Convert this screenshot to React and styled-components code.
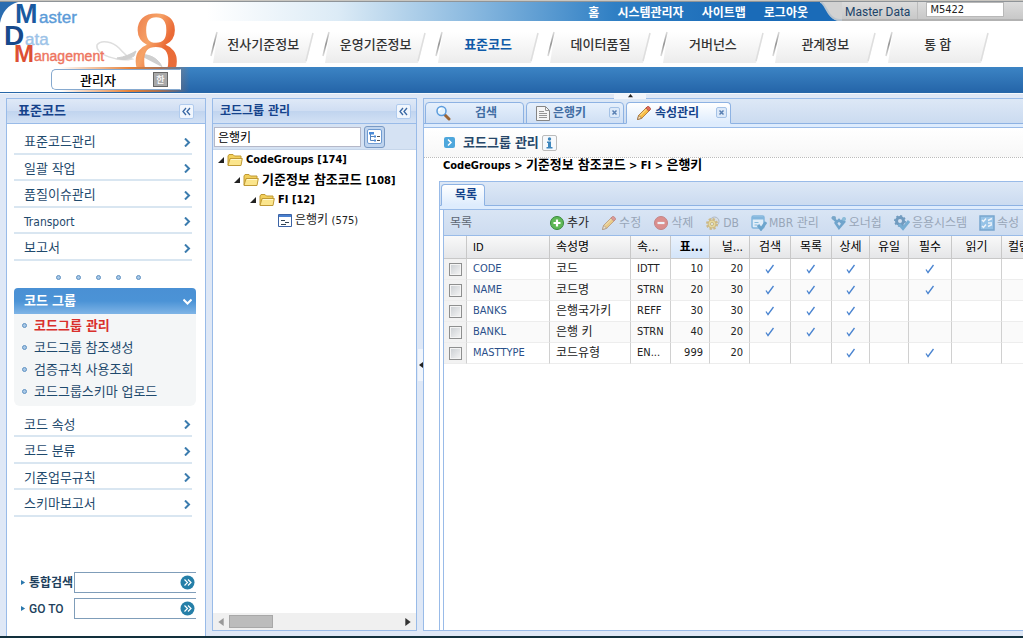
import React from 'react';
import styled, { createGlobalStyle, css } from 'styled-components';

const Global = createGlobalStyle`
  *, *::before, *::after { box-sizing: border-box; }
  html, body, #root { height: 100%; }
  body {
    margin: 0;
    overflow: hidden;
    background: #fff;
    color: #000;
    font: 12px/16px "DejaVu Sans Condensed", "Noto Sans CJK KR", sans-serif;
  }
  button, input { font: inherit; color: inherit; margin: 0; }
  button { padding: 0; border: 0; background: none; }
  a { color: inherit; text-decoration: none; }
  ul { list-style: none; margin: 0; padding: 0; }
  h1, h2, h3 { margin: 0; font: inherit; }
  svg { display: block; flex: none; }
`;

const Page = styled.div`
  min-height: 100vh;
  display: flex;
  flex-direction: column;
  background: #dfe8f6;
`;

/* ---------- header ---------- */
const Header = styled.header`
  display: flex;
  height: 67px;
  flex: none;
  border-top: 1px solid #c9c6c0;
  background: #fff;
`;
const LogoBox = styled.a`
  width: 207px;
  flex: none;
  overflow: hidden;
  border-top: 1px solid #8f9498;
`;
const HeaderMain = styled.div`
  flex: 1;
  min-width: 0;
  display: flex;
  flex-direction: column;
`;
const Utility = styled.div`
  display: flex;
  justify-content: flex-end;
  height: 20px;
  border-top: 1px solid #8f9498;
  background: linear-gradient(90deg, #fff 0, #dcebf6 16%, #82b4dd 34%, #2f7fc4 50%, #1a6bb8 66%);
`;
const UtilityLinks = styled.nav`
  display: flex;
  align-items: center;
  gap: 18px;
  padding: 0 12px 0 0;
  color: #fff;
  font-family: "Noto Sans CJK KR", sans-serif;
  font-size: 12px;
  font-weight: 700;
`;
const MasterData = styled.label`
  display: flex;
  align-items: flex-start;
  width: 181px;
  flex: none;
  padding-left: 3px;
  background: linear-gradient(#dcdcdc, #c8c8c8);
  border-bottom: 2px solid #b2b2b2;
  color: #1c4468;
  font: 400 12px/20px Roboto, sans-serif;
`;
const MasterText = styled.span`
  padding: 1px 7px 0 0;
  margin-right: 8px;
  border-right: 1px solid #bcbcbc;
  line-height: 18px;
  height: 17px;
`;
const MasterInput = styled.input`
  width: 78px;
  height: 15px;
  padding: 0 3px;
  border: 1px solid #b8b8b8;
  background: #fff;
  color: #222;
  font: 11px/13px "DejaVu Sans Condensed", sans-serif;
`;
const Tabs = styled.nav`
  display: flex;
  flex: 1;
  padding-right: 29px;
`;
const TopTab = styled.a`
  position: relative;
  flex: 1;
  display: flex;
  align-items: center;
  justify-content: center;
  color: ${p => (p.$active ? '#0f5aa8' : '#333')};
  font: ${p => (p.$active ? 700 : 500)} 13px/20px "Noto Sans CJK KR", sans-serif;
  span { position: relative; }
  svg { position: absolute; left: 3px; top: 9px; }
`;
const UserBar = styled.div`
  display: flex;
  height: 27px;
  flex: none;
  padding: 2px 0 2px 51px;
  border-bottom: 1px solid #f4f8fd;
  background: linear-gradient(90deg, #fff 60px, rgba(240, 130, 50, 0.95) 130px, rgba(196, 112, 60, 0.8) 160px, rgba(46, 112, 176, 0) 190px),
    linear-gradient(#3c84c4, #2464a8);
  box-shadow: inset 0 -1px 0 #2767a8;
`;
const UserBox = styled.div`
  display: flex;
  align-items: center;
  justify-content: space-between;
  width: 130px;
  height: 21px;
  padding: 0 12px 0 28px;
  border: 1px solid #86a9cf;
  border-right-color: #fff;
  border-radius: 5px 0 0 5px;
  background: #fff;
  font: 500 13px/18px "Noto Sans CJK KR", sans-serif;
`;
const LangButton = styled.button`
  width: 15px;
  height: 15px;
  border: 1px solid #666;
  background: #a9a9a9;
  color: #fff;
  font-size: 9px;
  line-height: 12px;
`;

/* ---------- panels ---------- */
const Workspace = styled.main`
  flex: 1;
  min-height: 0;
  display: flex;
  gap: 6px;
  padding: 4px 0 0 6px;
  border-bottom: 2px solid #12303c;
`;
const Panel = styled.section`
  display: flex;
  flex-direction: column;
  flex: none;
  width: ${p => p.$width}px;
  margin-bottom: ${p => (p.$raised ? 5 : 0)}px;
  border: 1px solid #99bbe8;
  border-bottom-width: ${p => (p.$raised ? 1 : 0)}px;
  background: #fff;
`;
const PanelHead = styled.div`
  display: flex;
  align-items: center;
  justify-content: space-between;
  height: 25px;
  flex: none;
  padding: 0 ${p => p.$pad}px 0 ${p => p.$left}px;
  border-bottom: 1px solid #99bbe8;
  background: linear-gradient(#dfe9f7, #d0def3 48%, #c0d4ef 50%, #d2e1f5);
  color: #15428b;
  font-weight: 700;
  font-size: ${p => p.$size}px;
`;
const Collapse = styled.button`
  width: 15px;
  height: 15px;
  display: grid;
  place-items: center;
  border: 1px solid #b0cbee;
  border-radius: 2px;
  background: #f1f6fd;
`;

/* ---------- sidebar ---------- */
const SideBody = styled.div`
  flex: 1;
  display: flex;
  flex-direction: column;
  padding: 4px 9px 0 7px;
  color: #1f4a6d;
  font-size: 13px;
`;
const MenuList = styled.ul`
  margin-right: 4px;
  li { height: 26px; border-bottom: 2px solid #d9e6f1; }
  li:nth-child(${p => p.$tall}) { height: 27px; }
`;
const MenuLink = styled.a`
  display: flex;
  align-items: center;
  justify-content: space-between;
  height: 100%;
  padding: 3px 1px 0 10px;
  font-size: ${p => (p.$latin ? 12 : 13)}px;
`;
const Dots = styled.div`
  display: flex;
  justify-content: center;
  gap: 15px;
  margin: 14px 13px 8px 0;
`;
const Dot = styled.span`
  width: 5px;
  height: 5px;
  flex: none;
  border-radius: 50%;
  border: 1px solid #5f91c2;
  background: #a8c8e6;
`;
const GroupButton = styled.button`
  display: flex;
  align-items: center;
  justify-content: space-between;
  height: 26px;
  padding: 0 4px 0 10px;
  border-radius: 4px 4px 0 0;
  background: linear-gradient(#4a90d4, #4b93d6 50%, #7fb4e6);
  color: #fff;
  font-weight: 700;
`;
const SubList = styled.ul`
  padding: 0 0 4px 8px;
  margin-bottom: 5px;
  border-radius: 0 0 6px 6px;
  background: #f4f6f7;
`;
const SubLink = styled.a`
  display: flex;
  align-items: center;
  gap: 7px;
  height: 22px;
  padding-top: 1px;
  ${p => p.$active && css`color: #d9302c; font-weight: 700;`}
`;
const Finder = styled.form`
  display: grid;
  grid-template-columns: 53px minmax(0, 1fr);
  row-gap: 5px;
  margin-top: auto;
  padding: 0 0 17px 7px;
`;
const FindLabel = styled.label`
  display: flex;
  align-items: center;
  gap: 3px;
  font: 700 12px/20px Roboto, "Noto Sans CJK KR", sans-serif;
  font-weight: ${p => (p.$light ? 500 : 700)};
  color: #213f5c;
  white-space: nowrap;
`;
const FindField = styled.div`
  display: flex;
  align-items: center;
  height: 21px;
  border: 1px solid #7f9db9;
  border-right: 0;
  input { flex: 1; min-width: 0; height: 19px; border: 0; background: none; outline: 0; }
`;
const GoButton = styled.button`
  width: 15px;
  height: 15px;
  flex: none;
  margin-right: 1px;
`;

/* ---------- tree ---------- */
const SearchBar = styled.div`
  display: flex;
  align-items: center;
  gap: 3px;
  height: 26px;
  flex: none;
  padding: 0 1px;
  border-bottom: 1px solid #c6d6ea;
  background: #d5e2f3;
  input {
    width: 147px;
    height: 20px;
    padding: 0 3px;
    border: 1px solid #b5b8c8;
    background: #fff;
    font-size: 12px;
  }
`;
const TreeButton = styled.button`
  width: 21px;
  height: 22px;
  display: grid;
  place-items: center;
  border: 1px solid #7a9ac4;
  border-radius: 3px;
  background: #bfd4ee;
`;
const Tree = styled.ul`
  flex: 1;
`;
const TreeRow = styled.li`
  display: flex;
  align-items: center;
  height: 20px;
  padding-left: ${p => 5 + p.$depth * 16}px;
  font-weight: ${p => (p.$bold ? 700 : 400)};
  font-size: ${p => (p.$bold ? 13 : 12)}px;
  white-space: nowrap;
  color: ${p => (p.$bold ? '#000' : '#222')};
  & > svg { margin-right: 3px; }
`;
const ScrollTrack = styled.div`
  display: flex;
  align-items: center;
  height: 17px;
  padding: 0 4px;
  background: #f0f0f0;
  & > svg:last-child { margin-left: auto; }
`;
const ScrollThumb = styled.div`
  width: 44px;
  height: 13px;
  margin-left: 4px;
  border: 1px solid #a8a8a8;
  background: #bcbcbc;
`;
const SplitHandle = styled.div`
  position: absolute;
  display: grid;
  place-items: center;
  background: #f1f5fb;
  ${p => (p.$top
    ? css`left: 190px; top: -5px; width: 32px; height: 5px;`
    : css`left: -6px; top: 250px; width: 5px; height: 32px;`)}
`;

/* ---------- content ---------- */
const Content = styled.section`
  position: relative;
  flex: 1;
  min-width: 0;
  display: flex;
  flex-direction: column;
  margin-bottom: 5px;
  border: 1px solid #99bbe8;
  border-right: 0;
  background: #fff;
`;
const TabStrip = styled.div`
  display: flex;
  align-items: flex-end;
  gap: ${p => (p.$inner ? 0 : 2)}px;
  flex: none;
  height: ${p => (p.$inner ? 28 : 29)}px;
  padding: 0 1px 3px;
  border-bottom: 1px solid #99bbe8;
  background: linear-gradient(#dde8f6, #cbdbf0 ${p => (p.$inner ? 23 : 24)}px, #8db2e3 ${p => (p.$inner ? 23 : 24)}px,
    #8db2e3 ${p => (p.$inner ? 24 : 25)}px, #deecfd ${p => (p.$inner ? 24 : 25)}px);
`;
const Tab = styled.button`
  display: flex;
  align-items: center;
  height: 22px;
  width: ${p => p.$width}px;
  padding: 0 3px 0 9px;
  border: 1px solid #8db2e3;
  border-bottom-color: ${p => (p.$active ? '#deecfd' : '#8db2e3')};
  border-radius: 4px 4px 0 0;
  background: ${p => (p.$active ? 'linear-gradient(#fff, #deecfd)' : 'linear-gradient(#e6f0fc, #cfdff4)')};
  color: ${p => (p.$active ? '#15428b' : '#416da3')};
  font-weight: 700;
  font-size: 12px;
  & > span { flex: 1; text-align: ${p => (p.$center ? 'center' : 'left')}; padding: 0 ${p => (p.$center ? 0 : 3)}px; }
  & > span:only-child { padding: 0; }
  & > svg:last-child { align-self: flex-start; margin-top: 4px; }
`;
const SectionTitle = styled.div`
  display: flex;
  align-items: center;
  height: 30px;
  flex: none;
  padding-left: 20px;
  border-bottom: 1px dotted #bbb;
  background: linear-gradient(#fff, #f7f7f7);
  color: #264769;
  font-size: 13px;
  font-weight: 700;
  h2 { margin: 0 3px 0 8px; }
`;
const InfoButton = styled.button`
  width: 15px;
  height: 16px;
  display: grid;
  place-items: center;
  border: 1px solid #bbb;
  border-radius: 2px;
  background: #f6f9fc;
`;
const Crumbs = styled.nav`
  height: 23px;
  flex: none;
  padding-left: 19px;
  font-size: 13px;
  line-height: 14px;
  font-weight: 700;
  white-space: pre;
`;
const Latin = styled.span`
  font-size: 11px;
`;
const Inner = styled.div`
  flex: 1;
  min-height: 0;
  display: flex;
  flex-direction: column;
  margin-left: 15px;
  border: 1px solid #99bbe8;
  border-width: 1px 0 0 1px;
`;
const Grid = styled.div`
  flex: 1;
  margin-left: 3px;
  border-left: 1px solid #99bbe8;
  overflow: hidden;
`;
const Toolbar = styled.div`
  display: flex;
  align-items: center;
  gap: 12px;
  height: 26px;
  padding-left: 6px;
  border-bottom: 1px solid #99bbe8;
  background: linear-gradient(#d9e5f4, #cddcf0);
  color: #5c6673;
  font-size: 12px;
  white-space: nowrap;
  h3 { width: 87px; flex: none; }
`;
const Tool = styled.button`
  display: flex;
  align-items: center;
  gap: 2px;
  flex: none;
  color: #222;
  svg { opacity: ${p => (p.disabled ? 0.6 : 1)}; }
  &:disabled { color: #98a6b8; }
`;
const Table = styled.table`
  width: 608px;
  table-layout: fixed;
  border-collapse: separate;
  border-spacing: 0;
`;
const Th = styled.th`
  height: 23px;
  padding: 0 6px;
  overflow: hidden;
  white-space: nowrap;
  border-right: 1px solid #c8c8c8;
  border-bottom: 1px solid #c8c8c8;
  background: ${p => (p.$sorted ? 'linear-gradient(#ebf3fd, #d3e4f9)' : 'linear-gradient(#f9f9f9, #e5e6e8)')};
  font-weight: ${p => (p.$sorted ? 700 : 400)};
  font-size: 12px;
  text-align: ${p => p.$align || 'center'};
`;
const Td = styled.td`
  height: 21px;
  padding: 0 ${p => (p.$align === 'center' ? 0 : 6)}px;
  overflow: hidden;
  white-space: nowrap;
  border-right: 1px solid #d0d0d0;
  border-bottom: 1px solid #ededed;
  color: ${p => (p.$link ? '#2a4f8a' : '#222')};
  font-size: ${p => (p.$korean ? 12 : 11)}px;
  text-align: ${p => p.$align || 'left'};
  svg { margin: 0 auto; }
`;
const Row = styled.tr`
  background: ${p => (p.$alt ? '#fafafa' : '#fff')};
  td:first-child { background: #f2f2f2; }
`;
const Check = styled.input`
  appearance: none;
  display: block;
  width: 13px;
  height: 13px;
  margin: 0 auto !important;
  border: 1px solid #8e8f8f;
  background: linear-gradient(135deg, #c9cdd1, #f6f6f6);
  box-shadow: inset 0 0 0 1px #f4f4f4;
`;

/* ---------- drawings ---------- */
const Logo = () => (
  <svg width="207" height="65" viewBox="0 2 207 65" role="img" aria-label="Master Data Management 8">
    <defs>
      <linearGradient id="orange" x1="0" y1="0" x2="1" y2="1">
        <stop offset="0" stopColor="#e8683c" />
        <stop offset="0.4" stopColor="#f6a367" />
        <stop offset="0.6" stopColor="#ea6a36" />
        <stop offset="1" stopColor="#e8703f" />
      </linearGradient>
    </defs>
    <path d="M0 2h18C8 5 2 12 0 23z" fill="#2a6cb0" />
    <path d="M97 45c4-6 16-3 22 3 4 4 6 8 13 11-13 3-37-4-35-14z" fill="none" stroke="#dedede" strokeWidth="1.500" />
    <path d="M117 58c8-1 14-4 19-7l-2 5c-5 3-10 5-17 2zM139 55c10-2 20 4 23 12" fill="#cfcfcf" stroke="#cfcfcf" />
    <g fontFamily="Liberation Sans, sans-serif">
      <text x="15" y="23" fontSize="27" fontWeight="700" fill="#1a5aa0">M</text>
      <text x="39" y="23" fontSize="17" fill="#5b9bd8" stroke="#5b9bd8" strokeWidth="0.4">aster</text>
      <text x="4" y="45" fontSize="28" fontWeight="700" fill="#174a8c">D</text>
      <text x="25" y="45" fontSize="17" fill="#9cc3e8" stroke="#9cc3e8" strokeWidth="0.4">ata</text>
      <text x="14" y="62" fontSize="24" fontWeight="700" fill="#dd4f34">M</text>
      <text x="34" y="61" fontSize="14" fill="#ee7560" stroke="#ee7560" strokeWidth="0.4">anagement</text>
    </g>
    <text x="132" y="78" fontFamily="Liberation Serif, serif" fontSize="97" fill="url(#orange)">8</text>
  </svg>
);
const TabShape = () => (
  <svg width="106" height="34" viewBox="0 0 106 34" aria-hidden="true">
    <defs>
      <linearGradient id="tabfill" x1="0" y1="0" x2="0" y2="1">
        <stop offset="0" stopColor="#fff" />
        <stop offset="1" stopColor="#ececec" />
      </linearGradient>
      <linearGradient id="tabedge" x1="0" y1="0" x2="0" y2="1">
        <stop offset="0" stopColor="#ddd" />
        <stop offset="0.5" stopColor="#909090" />
        <stop offset="1" stopColor="#ddd" />
      </linearGradient>
    </defs>
    <path d="M8 2h96l-8 31H3z" fill="url(#tabfill)" />
    <path d="M7 2L1 26" stroke="url(#tabedge)" strokeWidth="1.5" />
    <path d="M103 3l-7 28" stroke="#dedede" strokeWidth="1.5" />
  </svg>
);
const Curve = () => (
  <svg width="22" height="19" viewBox="0 0 22 19" aria-hidden="true">
    <path d="M0 0c6 0 7 19 20 19h2V0z" fill="#d2d2d2" />
    <path d="M0 0c6 0 7 18 20 18h2" fill="none" stroke="#b8c3cd" strokeWidth="2" />
  </svg>
);
const Chevrons = () => (
  <svg width="9" height="9" viewBox="0 0 9 9" fill="none" stroke="#3a68a4" strokeWidth="1.3">
    <path d="M4 1L1 4.500L4 8M8 1L5 4.500L8 8" />
  </svg>
);
const Arrow = ({ down }) => (
  <svg width="9" height="9" viewBox="0 0 9 9" fill="none" stroke={down ? '#fff' : '#3c7cae'} strokeWidth="2">
    <path d={down ? 'M0.500 2.500l4 4 4-4' : 'M3 0.500l4 4-4 4'} />
  </svg>
);
const Tri = ({ d, size = 6, color = '#222' }) => (
  <svg width={size} height={size} viewBox="0 0 6 6"><path d={d} fill={color} /></svg>
);
const Folder = () => (
  <svg width="16" height="14" viewBox="0 0 16 14">
    <path d="M1 12V3l1-1.500h4L7.500 3H14v4" fill="#f2cf5b" stroke="#c09a35" />
    <path d="M1 12.500L3 5.500H15.300L14 12.500z" fill="#fbe58c" stroke="#c09a35" />
    <path d="M4 6.500h10" stroke="#fff8cf" />
  </svg>
);
const Leaf = () => (
  <svg width="14" height="13" viewBox="0 0 14 13">
    <path d="M.5.5h13v12H.5z" fill="#fff" stroke="#3c63a5" />
    <path d="M1 2h12" stroke="#4a80cf" strokeWidth="2" />
    <path d="M3 6.500h4M7 8.500h4M3 10.500h5" stroke="#345" />
  </svg>
);
const Pencil = () => (
  <svg width="16" height="16" viewBox="0 0 16 16">
    <path d="M1.500 14.500l1.200-4.200L11 2l3 3-8.300 8.300z" fill="#f8bd45" stroke="#a66a2c" strokeWidth=".8" />
    <path d="M9.800 3.200L11.500 1.500c.8-.8 3.800 2 3 3L12.800 6z" fill="#e26b5a" stroke="#a84838" strokeWidth=".8" />
    <path d="M1.500 14.500l1.200-4.200 3 3z" fill="#fbe4bf" stroke="#8b633a" strokeWidth=".7" />
    <path d="M4 10.500L10.500 4" stroke="#ffe7a3" />
  </svg>
);
const Magnifier = () => (
  <svg width="17" height="16" viewBox="0 0 17 16">
    <path d="M10 10l4 4" stroke="#9b6535" strokeWidth="3" strokeLinecap="round" />
    <circle cx="6.500" cy="6" r="4.500" fill="#e4f3fd" stroke="#5b9bdc" strokeWidth="1.5" />
    <path d="M4 6a2.500 2.500 0 0 1 2.500-2.500" fill="none" stroke="#fff" strokeWidth="1.3" />
  </svg>
);
const Page16 = () => (
  <svg width="14" height="15" viewBox="0 0 14 15">
    <path d="M.5.500h9l4 4v10H.5z" fill="#f5f5f5" stroke="#858585" />
    <path d="M9.500.5v4h4M3 5.500h5M3 7.500h8M3 9.500h8M3 11.500h8" fill="none" stroke="#959595" />
  </svg>
);
const CloseIcon = () => (
  <svg width="11" height="11" viewBox="0 0 11 11">
    <rect x=".5" y=".5" width="10" height="10" rx="1.500" fill="#dce9f9" stroke="#a5c2e6" />
    <path d="M3.500 3.500l4 4M7.500 3.500l-4 4" stroke="#587fb2" strokeWidth="1.500" />
  </svg>
);
const Circle = ({ plus }) => (
  <svg width="16" height="16" viewBox="0 0 16 16">
    <circle cx="8" cy="8" r="6.500" fill={plus ? '#5fb857' : '#e05a4c'} stroke={plus ? '#37893a' : '#b8483f'} />
    <path d={plus ? 'M8 4.500v7M4.500 8h7' : 'M4.500 8h7'} stroke="#fff" strokeWidth="2.200" />
  </svg>
);
const Gear = () => (
  <svg width="16" height="16" viewBox="0 0 16 16">
    <circle cx="9.500" cy="6.500" r="4.500" fill="#d5dadf" stroke="#989ea4" />
    <circle cx="7" cy="9" r="4.800" fill="none" stroke="#c9a040" strokeWidth="2.500" strokeDasharray="2.200 1.570" />
    <circle cx="7" cy="9" r="4" fill="#f3d568" stroke="#c9a040" />
    <circle cx="7" cy="9" r="1.500" fill="#fff" stroke="#b99a3c" />
  </svg>
);
const Form = () => (
  <svg width="16" height="16" viewBox="0 0 16 16">
    <rect x="1" y="1" width="12" height="12" rx="1.500" fill="#eaf5fc" stroke="#4d9ad0" strokeWidth="1.500" />
    <path d="M1 3h12" stroke="#4d9ad0" strokeWidth="3" />
    <path d="M3.500 7.500h4M3.500 10h3" stroke="#55a4d0" />
    <path d="M7 10l3 4 5-7" fill="none" stroke="#2c7fb5" strokeWidth="3" />
  </svg>
);
const Owner = () => (
  <svg width="16" height="16" viewBox="0 0 16 16">
    <path d="M1 2l5 5 2-2 2 2 4-4M4 7l4 6 6-7" fill="none" stroke="#2f7db4" strokeWidth="2.500" />
    <circle cx="3" cy="3" r="2" fill="#3d80ad" /><circle cx="13" cy="4" r="2" fill="#5da5c9" />
  </svg>
);
const System = () => (
  <svg width="16" height="16" viewBox="0 0 16 16">
    <circle cx="6" cy="6" r="3.500" fill="none" stroke="#2f6d9e" strokeWidth="3" />
    <circle cx="6" cy="6" r="5.200" fill="none" stroke="#2f6d9e" strokeWidth="1.500" strokeDasharray="2 2" />
    <path d="M5 9l4 4.500L15 6" fill="none" stroke="#3b8dc0" strokeWidth="3" />
  </svg>
);
const Props = () => (
  <svg width="16" height="16" viewBox="0 0 16 16">
    <rect x="1" y="1" width="14" height="14" fill="#6fb0e0" stroke="#3d80b8" strokeWidth="1.500" />
    <path d="M3 5l1.500 1.500L7 3.500M3 11l1.500 1.500L7 9.500M9 5.500l4-2M9 11.500l4-2M9 8h4" fill="none" stroke="#fff" strokeWidth="1.500" />
  </svg>
);
const Tick = () => (
  <svg width="10" height="10" viewBox="0 0 10 10" role="img" aria-label="예">
    <path d="M1 5.500l2 3L8.500 1" fill="none" stroke="#4a84d0" strokeWidth="1.300" />
  </svg>
);

/* ---------- data ---------- */
const topTabs = ['전사기준정보', '운영기준정보', '표준코드', '데이터품질', '거버넌스', '관계정보', '통 합'];
const menuA = ['표준코드관리', '일괄 작업', '품질이슈관리', 'Transport', '보고서'];
const subMenu = ['코드그룹 관리', '코드그룹 참조생성', '검증규칙 사용조회', '코드그룹스키마 업로드'];
const menuB = ['코드 속성', '코드 분류', '기준업무규칙', '스키마보고서'];
const tools = [
  ['추가', <Circle plus />], ['수정', <Pencil />], ['삭제', <Circle />], ['DB', <Gear />],
  ['MBR 관리', <Form />], ['오너쉽', <Owner />], ['응용시스템', <System />], ['속성', <Props />],
];
const columns = [
  ['', 23], ['ID', 83, 'left'], ['속성명', 81, 'left'], ['속...', 40, 'left'], ['표...', 39, 'right'], ['널...', 40, 'right'],
  ['검색', 41], ['목록', 41], ['상세', 38], ['유일', 39], ['필수', 43], ['읽기', 50], ['컬럼', 50, 'left'],
];
const rows = [
  ['CODE', '코드', 'IDTT', 10, 20, '1110100'],
  ['NAME', '코드명', 'STRN', 20, 30, '1110100'],
  ['BANKS', '은행국가키', 'REFF', 30, 30, '1110000'],
  ['BANKL', '은행 키', 'STRN', 40, 20, '1110000'],
  ['MASTTYPE', '코드유형', 'EN...', 999, 20, '0010100'],
];

const Menu = ({ items, tall }) => (
  <MenuList $tall={tall}>
    {items.map(t => (
      <li key={t}><MenuLink href="#" $latin={t === 'Transport'}>{t}<Arrow /></MenuLink></li>
    ))}
  </MenuList>
);

const FindRow = ({ id, label, light }) => (
  <>
    <FindLabel htmlFor={id} $light={light}><Tri d="M0 0l5 3-5 3z" size={5} color="#2b78ad" />{label}</FindLabel>
    <FindField>
      <input id={id} type="text" />
      <GoButton type="button" aria-label={label}>
        <svg width="15" height="15" viewBox="0 0 15 15">
          <circle cx="7.500" cy="7.500" r="7" fill="#257fa8" />
          <path d="M4.500 4.500l3 3-3 3M8 4.500l3 3-3 3" fill="none" stroke="#fff" strokeWidth="1.200" />
        </svg>
      </GoButton>
    </FindField>
  </>
);

export default function App() {
  return (
    <Page>
      <Global />
      <Header>
        <LogoBox href="#"><Logo /></LogoBox>
        <HeaderMain>
          <Utility>
            <UtilityLinks>
              {['홈', '시스템관리자', '사이트맵', '로그아웃'].map(t => <a key={t} href="#">{t}</a>)}
            </UtilityLinks>
            <Curve />
            <MasterData>
              <MasterText>Master Data</MasterText>
              <MasterInput defaultValue="M5422" />
            </MasterData>
          </Utility>
          <Tabs>
            {topTabs.map(t => (
              <TopTab key={t} href="#" $active={t === '표준코드'}><TabShape /><span>{t}</span></TopTab>
            ))}
          </Tabs>
        </HeaderMain>
      </Header>
      <UserBar>
        <UserBox>관리자<LangButton type="button">한</LangButton></UserBox>
      </UserBar>

      <Workspace>
        <Panel as="aside" $width={200}>
          <PanelHead $left={11} $pad={11} $size={13}>
            <h2>표준코드</h2>
            <Collapse aria-label="접기"><Chevrons /></Collapse>
          </PanelHead>
          <SideBody>
            <Menu items={menuA} tall="odd" />
            <Dots>{[0, 1, 2, 3, 4].map(i => <Dot key={i} />)}</Dots>
            <GroupButton type="button">코드 그룹<Arrow down /></GroupButton>
            <SubList>
              {subMenu.map((t, i) => (
                <li key={t}><SubLink href="#" $active={i === 0}><Dot />{t}</SubLink></li>
              ))}
            </SubList>
            <Menu items={menuB} tall="even" />
            <Finder>
              <FindRow id="find" label="통합검색" />
              <FindRow id="goto" label="GO TO" light />
            </Finder>
          </SideBody>
        </Panel>

        <Panel $width={205} $raised>
          <PanelHead $left={7} $pad={5} $size={12}>
            <h2>코드그룹 관리</h2>
            <Collapse aria-label="접기"><Chevrons /></Collapse>
          </PanelHead>
          <SearchBar>
            <input aria-label="코드그룹 검색" defaultValue="은행키" />
            <TreeButton aria-label="트리 보기">
              <svg width="15" height="15" viewBox="0 0 15 15">
                <rect x=".5" y=".5" width="14" height="14" rx="1.500" fill="#fff" stroke="#6f9bd1" />
                <path d="M3.500 5v6.500h4M3.500 7.500h4" fill="none" stroke="#5583bd" />
                <path d="M2 3h5v2.500H2zM7 6.500h2v2H7zM7 10.500h2v2H7z" fill="#4b8bd8" />
                <path d="M10 7.500h3M10 11.500h3" stroke="#555" />
              </svg>
            </TreeButton>
          </SearchBar>
          <Tree>
            <TreeRow $depth={0} $bold><Tri d="M6 0v6H0z" /><Folder /><Latin>CodeGroups [174]</Latin></TreeRow>
            <TreeRow $depth={1} $bold><Tri d="M6 0v6H0z" /><Folder /><span>기준정보 참조코드 <Latin>[108]</Latin></span></TreeRow>
            <TreeRow $depth={2} $bold><Tri d="M6 0v6H0z" /><Folder /><Latin>FI [12]</Latin></TreeRow>
            <TreeRow $depth={3.75}><Leaf /><span>은행키 <Latin>(575)</Latin></span></TreeRow>
          </Tree>
          <ScrollTrack>
            <Tri d="M5 0v6L1 3z" size={8} color="#999" />
            <ScrollThumb />
            <Tri d="M1 0v6l4-3z" size={8} color="#333" />
          </ScrollTrack>
        </Panel>

        <Content>
          <SplitHandle $top><Tri d="M3 0l3 4H0z" size={5} /></SplitHandle>
          <SplitHandle><Tri d="M5 0v6L1 3z" size={6} /></SplitHandle>
          <TabStrip>
            <Tab $width={99} $center><Magnifier /><span>검색</span></Tab>
            <Tab $width={98}><Page16 /><span>은행키</span><CloseIcon /></Tab>
            <Tab $width={105} $active><Pencil /><span>속성관리</span><CloseIcon /></Tab>
          </TabStrip>
          <SectionTitle>
            <svg width="11" height="11" viewBox="0 0 11 11">
              <rect width="11" height="11" rx="2" fill="#4ea7dc" />
              <path d="M4 2.500l3 3-3 3" fill="none" stroke="#fff" strokeWidth="1.500" />
            </svg>
            <h2>코드그룹 관리</h2>
            <InfoButton aria-label="정보">
              <svg width="9" height="12" viewBox="0 0 9 12" fill="#3d86bd">
                <circle cx="4.500" cy="2" r="1.700" /><path d="M2 4.500h4V10h1.500v1.500h-6V10H3V6H2z" />
              </svg>
            </InfoButton>
          </SectionTitle>
          <Crumbs><Latin>CodeGroups &gt; </Latin>기준정보 참조코드<Latin> &gt; FI &gt; </Latin>은행키</Crumbs>
          <Inner>
            <TabStrip $inner><Tab $width={44} $active $center><span>목록</span></Tab></TabStrip>
            <Grid>
              <Toolbar>
                <h3>목록</h3>
                {tools.map(([t, icon], i) => <Tool key={t} type="button" disabled={i > 0}>{icon}{t}</Tool>)}
              </Toolbar>
              <Table>
                <colgroup>{columns.map(([t, w]) => <col key={t} width={w} />)}</colgroup>
                <thead>
                  <tr>
                    {columns.map(([t, , align], i) => (
                      <Th key={t} scope="col" $align={align} $sorted={i === 4}>{t === 'ID' ? <Latin>{t}</Latin> : t}</Th>
                    ))}
                  </tr>
                </thead>
                <tbody>
                  {rows.map(([id, name, type, a, b, flags], r) => (
                    <Row key={id} $alt={r % 2 === 1}>
                      <Td $align="center"><Check type="checkbox" aria-label={id} /></Td>
                      <Td $link>{id}</Td>
                      <Td $korean>{name}</Td>
                      <Td>{type}</Td>
                      <Td $align="right">{a}</Td>
                      <Td $align="right">{b}</Td>
                      {[...flags].map((f, i) => <Td key={i} $align="center">{f === '1' && <Tick />}</Td>)}
                    </Row>
                  ))}
                </tbody>
              </Table>
            </Grid>
          </Inner>
        </Content>
      </Workspace>
    </Page>
  );
}
